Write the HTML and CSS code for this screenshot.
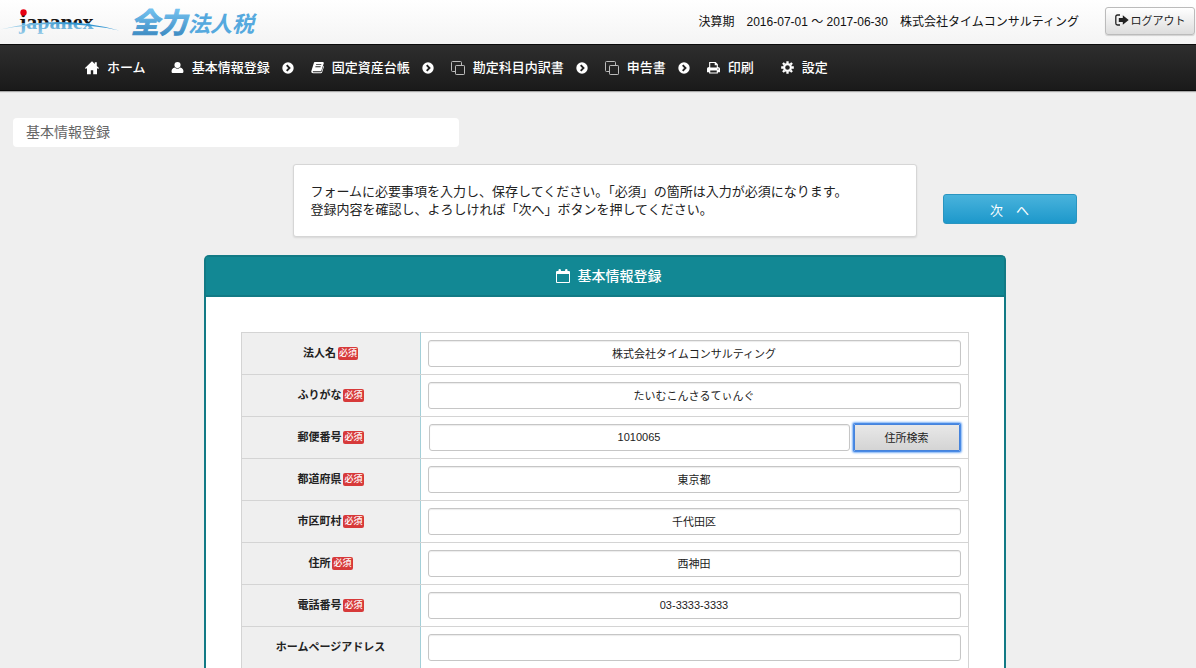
FILE: index.html
```html
<!DOCTYPE html>
<html lang="ja">
<head>
<meta charset="utf-8">
<title>基本情報登録</title>
<link rel="stylesheet" href="styles.css">
</head>
<body>
<svg class="sprite" aria-hidden="true">
  <symbol id="home" viewBox="0 0 14 14"><path d="M7 .3 0 6.900l.9 1L2 7V13.300h3.800V9.200h2.400v4.100H12V7l1.100.9.9-1-2.200-2V1.300H9.800v1.700z"/></symbol>
  <symbol id="user" viewBox="0 0 14 14"><circle cx="7" cy="4.400" r="3.300"/><path d="M4.200 7Q5.400 8.300 7 8.300T9.800 7c2.600.2 3.600 2.400 3.600 4.200 0 1-.7 1.800-1.700 1.800H2.300c-1 0-1.700-.8-1.700-1.800C.6 9.400 1.600 7.200 4.200 7z"/></symbol>
  <symbol id="book" viewBox="0 0 14 14"><path fill-rule="evenodd" d="M4.500 1.200h8.200c.9 0 1.300.6 1 1.400l-2.500 7.600c-.2.600-.600.900-1.200.900H2.500c-.7 0-.8.700-.1.900h8.100c.5 0 .8-.2 1-.7l2-6.300c.5.300.6.8.4 1.300l-1.900 5.700c-.2.700-.7 1.100-1.400 1.100H2.300C.9 13.100 0 11.900.4 10.700L2.900 2.600c.3-.9.800-1.400 1.600-1.400zM5.600 3.500l-.3.900h5.600l.3-.9zM4.900 5.700l-.3.900h5.600l.3-.9z"/></symbol>
  <symbol id="copy" viewBox="0 0 14 14"><g fill="none" stroke="currentColor" stroke-linejoin="round"><rect x="4.500" y="4.500" width="9" height="9" rx=".7"/><path d="M4.500 10.500h-3q-1 0-1-1v-8q0-1 1-1h8q1 0 1 1v3"/></g></symbol>
  <symbol id="print" viewBox="0 0 14 14"><path fill-rule="evenodd" d="M2.300 1h7L11.700 3.500v3c1.300 0 2.300.8 2.300 2V12h-2.300v1.500H2.300V12H0V8.500c0-1.200 1-2 2.300-2zm1.200 1.200v4.700h7V4.600H8.300V2.200zm0 8v2.100h7v-2.100zm8.300-2a.6.6 0 1 0 .1 0z"/></symbol>
  <symbol id="gear" viewBox="0 0 14 14"><g fill="none" stroke="currentColor"><circle cx="7" cy="7" r="3.700" stroke-width="2.400"/><path stroke-width="2.500" d="M7 .2v2M7 11.800v2M.2 7h2M11.800 7h2M2.100 2.100l1.500 1.500M10.400 10.400l1.500 1.500M2.100 11.900l1.500-1.500M10.400 3.600l1.500-1.500"/></g></symbol>
  <symbol id="chevron" viewBox="0 0 12 12"><circle cx="6" cy="6" r="5.700"/><path d="M4.700 3.100 7.500 6 4.700 8.900" fill="none" stroke="#222" stroke-width="1.900"/></symbol>
  <symbol id="signout" viewBox="0 0 14 14"><path d="M5 2H2.500Q.8 2 .8 3.700v6.600Q.8 12 2.500 12H5" fill="none" stroke="currentColor" stroke-width="1.300"/><path d="M3.800 5h4V2.200L13.700 7l-5.900 4.800V9h-4z"/></symbol>
  <symbol id="calendar" viewBox="0 0 14 14"><path fill-rule="evenodd" d="M1 2h1.500V.9Q2.500 0 3.700 0t1.200.9V2h4.200V.9Q9.100 0 10.300 0t1.200.9V2H13q1 0 1 1v10q0 1-1 1H1q-1 0-1-1V3q0-1 1-1zm0 3v8h12V5z"/></symbol>
</svg>

<header class="topbar">
  <a class="brand" href="#" aria-label="japanex 全力法人税">
    <svg class="brand-art" viewBox="0 0 270 44">
      <defs>
        <linearGradient id="ink" gradientUnits="userSpaceOnUse" x1="0" y1="12" x2="0" y2="34">
          <stop offset="0" stop-color="#171313"/><stop offset=".48" stop-color="#171313"/><stop offset=".5" stop-color="#4a9fd2"/><stop offset="1" stop-color="#9bcce8"/>
        </linearGradient>
        <linearGradient id="sky" gradientUnits="userSpaceOnUse" x1="0" y1="10" x2="0" y2="35">
          <stop offset="0" stop-color="#72c0ee"/><stop offset="1" stop-color="#3f8dc4"/>
        </linearGradient>
        <linearGradient id="arc" x1="0" x2="1"><stop offset="0" stop-color="#b5dcef"/><stop offset=".6" stop-color="#2f93cf"/><stop offset="1" stop-color="#3f9dd6"/></linearGradient>
      </defs>
      <text class="brand-latin" x="19" y="29" fill="url(#ink)">japanex</text>
      <path d="M0 29.500Q62 14 119 30.500 62 18 0 29.500z" fill="url(#arc)"/>
      <circle cx="23.500" cy="12.500" r="3.200" fill="#e60012"/>
      <text class="brand-heavy" x="131" y="33" fill="url(#sky)" stroke="url(#sky)">全力</text>
      <text class="brand-name" x="188" y="32" fill="#55a9de">法人税</text>
    </svg>
  </a>
  <p class="period">決算期　2016-07-01 〜 2017-06-30　株式会社タイムコンサルティング</p>
  <button class="btn logout" type="button"><svg class="icon"><use href="#signout"/></svg>ログアウト</button>
</header>

<nav class="nav">
  <a class="nav-item wide" href="#"><svg class="icon"><use href="#home"/></svg>ホーム</a>
  <a class="nav-item" href="#"><svg class="icon small"><use href="#user"/></svg>基本情報登録</a>
  <svg class="step"><use href="#chevron"/></svg>
  <a class="nav-item" href="#"><svg class="icon small"><use href="#book"/></svg>固定資産台帳</a>
  <svg class="step"><use href="#chevron"/></svg>
  <a class="nav-item" href="#"><svg class="icon thin"><use href="#copy"/></svg>勘定科目内訳書</a>
  <svg class="step"><use href="#chevron"/></svg>
  <a class="nav-item" href="#"><svg class="icon thin"><use href="#copy"/></svg>申告書</a>
  <svg class="step"><use href="#chevron"/></svg>
  <a class="nav-item wide" href="#"><svg class="icon small"><use href="#print"/></svg>印刷</a>
  <a class="nav-item" href="#"><svg class="icon small"><use href="#gear"/></svg>設定</a>
</nav>

<main class="page">
  <h1 class="page-title">基本情報登録</h1>
  <div class="intro">
    <p class="message">フォームに必要事項を入力し、保存してください。「必須」の箇所は入力が必須になります。<br>登録内容を確認し、よろしければ「次へ」ボタンを押してください。</p>
    <button class="btn next" type="button">次　へ</button>
  </div>
  <section class="panel">
    <h2 class="panel-head"><svg class="icon"><use href="#calendar"/></svg>基本情報登録</h2>
    <form class="panel-body">
      <table class="fields">
        <tr><th scope="row"><label for="corp">法人名</label><span class="badge">必須</span></th><td><input class="field" id="corp" value="株式会社タイムコンサルティング"></td></tr>
        <tr><th scope="row"><label for="kana">ふりがな</label><span class="badge">必須</span></th><td><input class="field" id="kana" value="たいむこんさるてぃんぐ"></td></tr>
        <tr><th scope="row"><label for="zip">郵便番号</label><span class="badge">必須</span></th><td><div class="zip"><input class="field" id="zip" value="1010065"><button class="search" type="button">住所検索</button></div></td></tr>
        <tr><th scope="row"><label for="pref">都道府県</label><span class="badge">必須</span></th><td><input class="field" id="pref" value="東京都"></td></tr>
        <tr><th scope="row"><label for="city">市区町村</label><span class="badge">必須</span></th><td><input class="field" id="city" value="千代田区"></td></tr>
        <tr><th scope="row"><label for="addr">住所</label><span class="badge">必須</span></th><td><input class="field" id="addr" value="西神田"></td></tr>
        <tr><th scope="row"><label for="tel">電話番号</label><span class="badge">必須</span></th><td><input class="field" id="tel" type="tel" value="03-3333-3333"></td></tr>
        <tr><th scope="row"><label for="url">ホームページアドレス</label></th><td><input class="field" id="url" type="url"></td></tr>
      </table>
    </form>
  </section>
</main>
</body>
</html>
```

FILE: styles.css
```css
* { box-sizing: border-box; }

body {
  margin: 0;
  background: #efefef;
  color: #222;
  font: 12px/18px "Liberation Sans", "Noto Sans CJK JP", sans-serif;
}

h1, h2, p { margin: 0; }
button, input { font-family: inherit; color: inherit; }

.sprite { display: none; }
.icon { width: 14px; height: 14px; fill: currentColor; flex: none; }
.icon.small { width: 13px; height: 13px; }
.icon.thin { color: #bbb; }

.topbar {
  display: flex;
  align-items: center;
  height: 44px;
  padding-right: 1px;
  background: linear-gradient(#fff, #f4f4f4);
}
.brand { display: block; height: 44px; margin-right: auto; }
.brand-art { display: block; width: 270px; height: 44px; }
.brand-latin { font: bold 22px "Liberation Serif", serif; }
.brand-heavy { font: italic bold 28px "Noto Sans CJK JP", sans-serif; stroke-width: 1; }
.brand-name { font: italic bold 22px "Noto Sans CJK JP", sans-serif; }
.period { margin-right: 26px; color: #111; }

.btn {
  display: flex;
  align-items: center;
  justify-content: center;
  border: 1px solid #bbb;
  border-radius: 3px;
}
.logout {
  width: 90px;
  height: 28px;
  gap: 2px;
  padding: 0 0 2px;
  margin-bottom: 2px;
  background: linear-gradient(#fff, #ddd);
  box-shadow: 0 1px 1px rgba(0, 0, 0, .15);
  font-size: 11px;
}

.nav {
  display: flex;
  align-items: center;
  height: 47px;
  padding-left: 85px;
  border-top: 1px solid #0c0c0c;
  border-bottom: 1px solid #080808;
  background: linear-gradient(#2e2e2e, #1a1a1a);
  box-shadow: 0 1px 1px rgba(0, 0, 0, .3);
}
.nav-item {
  display: flex;
  align-items: center;
  gap: 8px;
  color: #fff;
  font-size: 13px;
  font-weight: 500;
  text-decoration: none;
}
.nav-item.wide { margin-right: 25px; }
.nav-item.wide ~ .nav-item.wide { margin-right: 27px; }
.step { width: 12px; height: 12px; margin: 0 17px 0 12px; fill: #fff; }

.page { padding: 27px 0 0 13px; }
.page-title {
  width: 446px;
  max-width: 100%;
  padding: 5px 13px;
  border-radius: 4px;
  background: #fff;
  color: #666;
  font-size: 14px;
  font-weight: 400;
  line-height: 19px;
}
.intro {
  display: grid;
  grid-template-columns: 1fr minmax(0, 624px) 1fr;
  column-gap: 26px;
  align-items: end;
  margin: 17px 0 18px;
}
.message {
  grid-column: 2;
  padding: 18px 17px 17px;
  border: 1px solid #d6d6d6;
  border-radius: 3px;
  background: #fff;
  box-shadow: 0 1px 2px rgba(0, 0, 0, .1);
  font-size: 13px;
}
.next {
  width: 134px;
  height: 30px;
  margin-bottom: 13px;
  border-color: #2a95c0;
  background: linear-gradient(#49b3dc, #1d98cb);
  color: #fff;
  font-size: 13px;
}

.panel {
  max-width: 802px;
  margin: 0 auto;
  border: 2px solid #127a85;
  border-bottom: 0;
  border-radius: 5px 5px 0 0;
  background: #fff;
}
.panel-head {
  display: flex;
  align-items: center;
  justify-content: center;
  gap: 8px;
  height: 40px;
  padding-left: 8px;
  border-bottom: 2px solid #127a85;
  background: #128894;
  color: #fff;
  font-size: 14px;
  font-weight: 500;
}
.panel-body { padding: 35px 35px 0; }

.fields { width: 100%; border-collapse: collapse; table-layout: fixed; }
.fields th, .fields td { height: 42px; border: 1px solid #d4d4d4; vertical-align: middle; }
.fields th {
  width: 179px;
  padding: 0 0 2px;
  border-right-color: #a3cfd8;
  background: #efefef;
  font-size: 11px;
}
.fields td { padding: 0 7px; }
.fields tr:last-child > * { border-bottom: 0; }
.badge {
  display: inline-block;
  margin-left: 2px;
  padding: 0 1px;
  border-radius: 2px;
  background: #d73a3a;
  color: #fff;
  font-size: 9px;
  font-weight: 500;
  line-height: 13px;
  vertical-align: 1px;
}
.field {
  display: block;
  width: 100%;
  height: 27px;
  padding: 0 6px 2px;
  border: 1px solid #c6c6c6;
  border-radius: 3px;
  background: #fff;
  box-shadow: inset 0 1px 1px rgba(0, 0, 0, .08);
  font-size: 11px;
  text-align: center;
}
.zip { display: flex; gap: 4px; padding: 0 1px; }
.zip .field { flex: 1; min-width: 0; }
.search {
  width: 106px;
  height: 27px;
  padding: 0 6px 2px;
  border: 1px solid #4583dc;
  border-radius: 1px;
  background: linear-gradient(#e8e8e8, #d4d4d4);
  box-shadow: 0 0 0 1px #4a8be6, 0 0 2px 2px #7fb2f5;
  font-size: 11px;
}
```
